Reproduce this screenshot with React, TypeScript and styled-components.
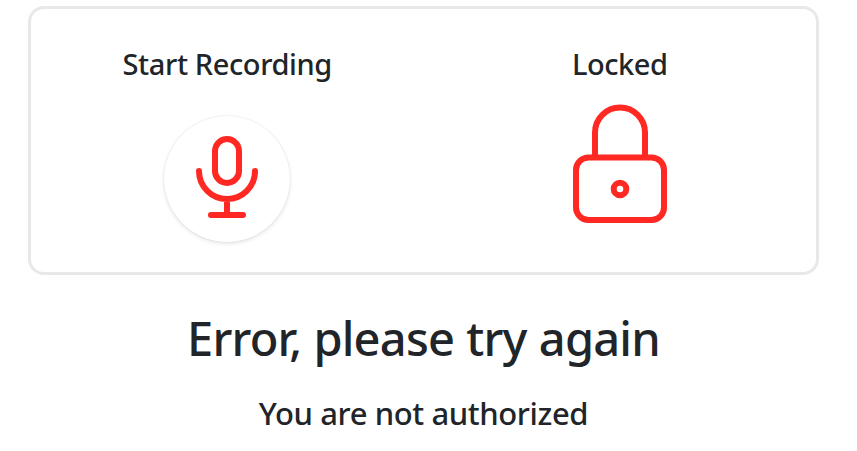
import React from 'react';
import styled, { createGlobalStyle } from 'styled-components';

const GlobalStyle = createGlobalStyle`
  * { box-sizing: border-box; }
  body {
    margin: 0;
    background: #fff;
    color: #212529;
    font-family: "Segoe UI", "Noto Sans", "Open Sans", sans-serif;
    font-weight: 500;
  }
  h1, h2, h3 { margin: 0; font-weight: 500; white-space: nowrap; }
`;

const Page = styled.main`
  display: flex;
  flex-direction: column;
  align-items: center;
  width: 791px;
  margin-left: 28px;
  padding-top: 6px;
`;

const Panel = styled.section`
  display: grid;
  grid-template-columns: 1fr 1fr;
  width: 100%;
  height: 269px;
  border: 3px solid #e8e8e8;
  border-radius: 16px;
`;

const Column = styled.div`
  display: flex;
  flex-direction: column;
  align-items: center;
  padding-top: 37px;
`;

const Label = styled.h3<{ $spacing: number }>`
  font-size: 29px;
  line-height: 36px;
  letter-spacing: ${(p) => p.$spacing}px;
`;

const RecordButton = styled.button`
  display: grid;
  place-items: center;
  width: 126px;
  height: 126px;
  margin-top: 34px;
  padding: 0;
  border: 0;
  border-radius: 50%;
  background: #fff;
  box-shadow: 0 2px 4px rgba(0, 0, 0, 0.09), 0 0 2px rgba(0, 0, 0, 0.12);
`;

const Icon = styled.svg`
  display: block;
  fill: none;
  stroke: #ff2823;
  stroke-width: 6;
`;

const LockIcon = styled(Icon)`
  margin-top: 21px;
`;

const Title = styled.h1`
  margin-top: 34px;
  font-size: 47px;
  line-height: 58px;
  letter-spacing: -0.8px;
  word-spacing: 0.8px;
`;

const Message = styled.h2`
  margin-top: 26px;
  font-size: 31px;
  line-height: 40px;
  letter-spacing: -0.4px;
`;

export default function App() {
  return (
    <>
      <GlobalStyle />
      <Page>
        <Panel>
          <Column>
            <Label $spacing={-0.38}>Start Recording</Label>
            <RecordButton aria-label="Start recording">
              <Icon width="126" height="126" viewBox="1 1 126 126" strokeLinecap="round">
                <rect x="52" y="24" width="24" height="44" rx="12" />
                <path d="M36 56a28 28 0 0 0 56 0M64 84v16M48 100h32" />
              </Icon>
            </RecordButton>
          </Column>
          <Column>
            <Label $spacing={-0.5}>Locked</Label>
            <LockIcon width="96" height="122" viewBox="0 0 96 122">
              <path d="M23 55V29.5a25 25 0 0 1 50 0V55" />
              <rect x="4" y="54.5" width="88" height="62.5" rx="12.5" />
              <circle cx="48" cy="86" r="6.3" />
            </LockIcon>
          </Column>
        </Panel>
        <Title>Error, please try again</Title>
        <Message>You are not authorized</Message>
      </Page>
    </>
  );
}
